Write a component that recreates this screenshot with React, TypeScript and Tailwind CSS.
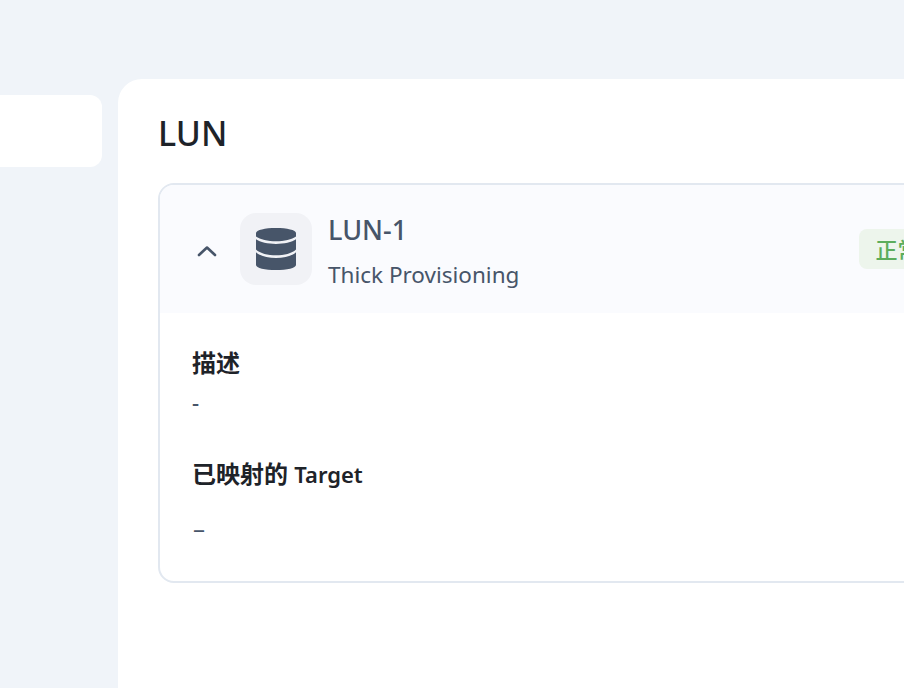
const font = "font-['Noto_Sans','Noto_Sans_CJK_SC',sans-serif]";

function Chevron() {
  return (
    <svg width="24" height="24" viewBox="0 0 24 24" fill="none" stroke="#475569" strokeWidth="2.6" strokeLinecap="round" strokeLinejoin="round">
      <path d="M4 18 L12 10.500 L20 18" />
    </svg>
  );
}

function DbIcon() {
  return (
    <svg width="40" height="42" viewBox="0 0 40 42" fill="#475569">
      <path d="M0 5C0 2 9 0 20 0s20 2 20 5v3.500C36 11.500 28 13.300 20 13.300S4 11.500 0 8.500z" />
      <path d="M0 11.300C4 14.300 12 15.900 20 15.900S36 14.300 40 11.300V21.500C36 25.500 28 27.300 20 27.300S4 25.500 0 21.500z" />
      <path d="M0 24.200C4 28 12 29.900 20 29.900S36 28 40 24.200V37C40 40 31 42 20 42S0 40 0 37z" />
    </svg>
  );
}

function LunCard() {
  return (
    <div className="w-[1100px] shrink-0 overflow-hidden rounded-2xl border-2 border-[#e2e8f0]">
      <div className="flex h-[128px] items-center bg-[#fafbfe] pl-[35px]">
        <Chevron />
        <div className="ml-[21px] flex h-[72px] w-[72px] items-center justify-center rounded-2xl bg-[#f1f2f6]">
          <DbIcon />
        </div>
        <div className="ml-4 pt-[4px]">
          <div className="text-[27px] leading-[36px] font-medium text-[#475569]">LUN-1</div>
          <div className="mt-[12px] text-[22.5px] leading-[30px] text-[#475569]">Thick Provisioning</div>
        </div>
        <div className="ml-[340px] flex h-[40px] items-center rounded-lg bg-[#edf5ec] px-4 text-[22px] font-medium text-[#5cad5c]">
          正常
        </div>
      </div>
      <div className="px-[32px] pt-[32px] pb-[37px]">
        <div className="text-[24px] leading-[36px] font-semibold text-[#1e2329]">描述</div>
        <div className="mt-[6px] text-[22px] leading-[30px] font-medium text-[#475569]">-</div>
        <div className="mt-[39px] text-[24px] leading-[36px] font-semibold text-[#1e2329]">
          已映射的 <span className="text-[22px]">Target</span>
        </div>
        <div className="mt-[20px] pl-[1px] text-[24px] leading-[32px] text-[#475569]">–</div>
      </div>
    </div>
  );
}

export default function App() {
  return (
    <div className={`flex h-[688px] w-[904px] gap-4 overflow-hidden bg-[#f0f4f9] ${font}`}>
      <div className="w-[102px] shrink-0 pt-[95px]">
        <div className="h-[72px] rounded-r-xl bg-white" />
      </div>
      <div className="mt-[79px] min-w-0 flex-1 overflow-hidden rounded-tl-3xl bg-white pt-[28px] pl-[40px]">
        <h1 className="text-[34px] leading-[52px] font-medium text-[#1e2329]">LUN</h1>
        <div className="mt-[24px]">
          <LunCard />
        </div>
      </div>
    </div>
  );
}
